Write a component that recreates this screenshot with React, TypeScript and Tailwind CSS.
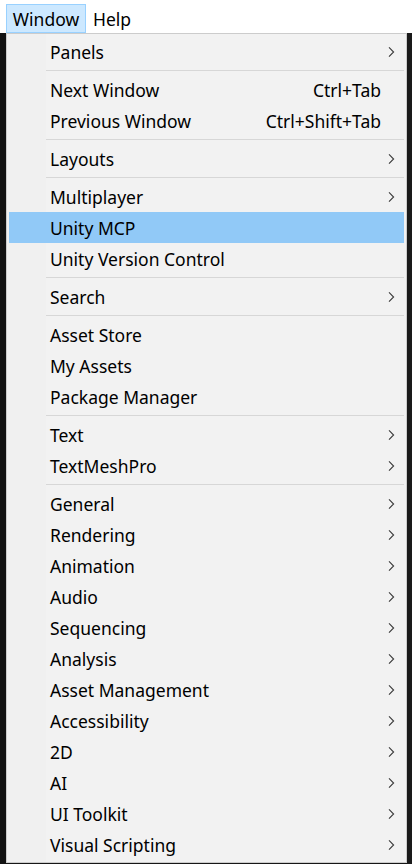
import React from "react";

type Item = { label: string; shortcut?: string; sub?: boolean; active?: boolean } | "sep";

const items: Item[] = [
  { label: "Panels", sub: true },
  "sep",
  { label: "Next Window", shortcut: "Ctrl+Tab" },
  { label: "Previous Window", shortcut: "Ctrl+Shift+Tab" },
  "sep",
  { label: "Layouts", sub: true },
  "sep",
  { label: "Multiplayer", sub: true },
  { label: "Unity MCP", active: true },
  { label: "Unity Version Control" },
  "sep",
  { label: "Search", sub: true },
  "sep",
  { label: "Asset Store" },
  { label: "My Assets" },
  { label: "Package Manager" },
  "sep",
  { label: "Text", sub: true },
  { label: "TextMeshPro", sub: true },
  "sep",
  { label: "General", sub: true },
  { label: "Rendering", sub: true },
  { label: "Animation", sub: true },
  { label: "Audio", sub: true },
  { label: "Sequencing", sub: true },
  { label: "Analysis", sub: true },
  { label: "Asset Management", sub: true },
  { label: "Accessibility", sub: true },
  { label: "2D", sub: true },
  { label: "AI", sub: true },
  { label: "UI Toolkit", sub: true },
  { label: "Visual Scripting", sub: true },
];

const Chevron = () => (
  <svg width="7" height="11" viewBox="0 0 7 11" className="absolute right-[9px] top-1/2 -translate-y-1/2">
    <path d="M1 0.8 L5.6 5.5 L1 10.2" fill="none" stroke="#3a3a3a" strokeWidth="1.1" />
  </svg>
);

export default function App() {
  return (
    <div
      className="w-[412px] h-[864px] bg-[#161616] flex flex-col overflow-hidden text-black"
      style={{ fontFamily: '"Noto Sans", "Open Sans", sans-serif' }}
    >
      {/* Menu bar */}
      <div className="h-[33px] bg-white flex items-end shrink-0 text-[17.5px] leading-none">
        <div className="ml-[6px] w-[80px] h-[29px] bg-[#cce8ff] border border-[#99d1ff] flex items-center justify-center pt-[3px]">
          Window
        </div>
        <div className="h-[29px] flex items-center pl-[7px] pt-[3px]">Help</div>
      </div>

      <div className="flex flex-1">
        <div className="w-[6px] bg-[#121212]" />
        {/* Dropdown */}
        <div className="w-[401px] h-[830px] bg-[#f2f2f2] border border-[#cccccc] p-[2px] text-[17.5px] relative">
          <div className="absolute left-0 top-0 bottom-0 w-[39px] bg-[#f0f0f0]" />
          <div className="relative flex flex-col">
            {items.map((it, i) =>
              it === "sep" ? (
                <div key={i} className="h-[7px] flex items-center pl-[37px]">
                  <div className="h-px w-full bg-[#d7d7d7]" />
                </div>
              ) : (
                <div
                  key={i}
                  className={`relative h-[31px] flex items-center pl-[41px] pt-[3px] leading-none ${
                    it.active ? "bg-[#91c9f7]" : ""
                  }`}
                >
                  <span>{it.label}</span>
                  {it.shortcut && (
                    <span className="ml-auto pr-[23px]">{it.shortcut}</span>
                  )}
                  {it.sub && <Chevron />}
                </div>
              )
            )}
          </div>
        </div>
        <div className="flex-1 bg-[#1a1a1a]" />
      </div>
    </div>
  );
}
